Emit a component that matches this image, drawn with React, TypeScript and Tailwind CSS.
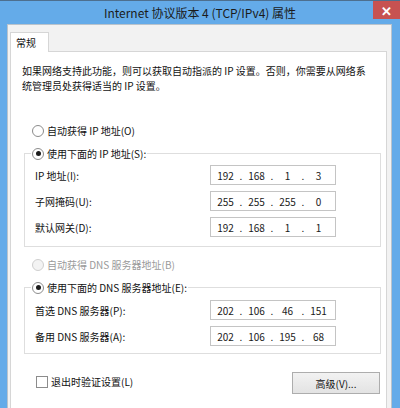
import { Fragment } from "react";

const FONT = { fontFamily: '"Noto Sans CJK SC", "Noto Sans", sans-serif' };

function Radio({ checked, disabled }: { checked?: boolean; disabled?: boolean }) {
  return (
    <span
      className={
        "flex h-[12px] w-[12px] shrink-0 items-center justify-center rounded-full border " +
        (disabled ? "border-[#cfcfcf] bg-[#f3f3f3]" : "border-[#8c8c8c] bg-white")
      }
    >
      {checked && <span className="h-[5px] w-[5px] rounded-full bg-[#1c1c1c]" />}
    </span>
  );
}

function IpBox({ parts }: { parts: string[] }) {
  return (
    <div className="flex h-[20px] w-[126px] items-center border border-[#c4c4c4] bg-white pl-[1px] text-[#1a1a1a]">
      {parts.map((p, i) => (
        <Fragment key={i}>
          <span className="w-[27px] text-center">{p}</span>
          {i < 3 && <span className="w-[4px] text-center">.</span>}
        </Fragment>
      ))}
    </div>
  );
}

function Row({ label, parts }: { label: string; parts: string[] }) {
  return (
    <div className="flex h-[20px] items-center">
      <span className="w-[175px]">{label}</span>
      <IpBox parts={parts} />
    </div>
  );
}

export default function App() {
  return (
    <div
      className="flex h-[408px] w-[400px] flex-col overflow-hidden border-t border-[#4d6f8f] bg-[#64abe9]"
      style={FONT}
    >
      {/* title bar */}
      <div className="grid h-[23px] shrink-0 grid-cols-[27px_1fr_27px]">
        <div />
        <div className="flex items-center justify-center text-[12px] text-[#1b1b1b]">
          Internet 协议版本 4 (TCP/IPv4) 属性
        </div>
        <div className="flex h-[18px] items-center justify-center bg-[#c75251] text-[13px] font-bold leading-none text-white">
          ✕
        </div>
      </div>

      {/* client area */}
      <div className="ml-[7px] flex w-[385px] flex-1 flex-col border border-b-0 border-[#b9c3cc] bg-[#f2f2f2] pl-[2px] pt-[7px] text-[10px] leading-[15px] text-[#111]">
        <div className="-mb-px flex">
          <div className="relative z-10 h-[20px] w-[39px] border border-b-0 border-[#d6d6d6] bg-white pl-[5px] pt-[2px]">
            常规
          </div>
        </div>
        <div className="flex w-[377px] flex-1 flex-col border border-b-0 border-[#d6d6d6] bg-white">
          <p className="whitespace-nowrap pl-[11px] pt-[11px]">
            如果网络支持此功能，则可以获取自动指派的 IP 设置。否则，你需要从网络系
            <br />
            统管理员处获得适当的 IP 设置。
          </p>

          <div className="mt-[30px] flex h-[15px] items-center gap-[3px] pl-[21px]">
            <Radio />
            <span>自动获得 IP 地址(O)</span>
          </div>

          <fieldset className="ml-[13px] mt-[8px] w-[357px] border border-[#dedede] px-[10px] pb-[9px] pt-[4px]">
            <legend className="ml-[-4px] flex items-center gap-[3px] px-[1px]">
              <Radio checked />
              <span>使用下面的 IP 地址(S):</span>
            </legend>
            <div className="flex flex-col gap-[6px]">
              <Row label="IP 地址(I):" parts={["192", "168", "1", "3"]} />
              <Row label="子网掩码(U):" parts={["255", "255", "255", "0"]} />
              <Row label="默认网关(D):" parts={["192", "168", "1", "1"]} />
            </div>
          </fieldset>

          <div className="mt-[10px] flex h-[15px] items-center gap-[3px] pl-[21px] text-[#9a9a9a]">
            <Radio disabled />
            <span>自动获得 DNS 服务器地址(B)</span>
          </div>

          <fieldset className="ml-[13px] mt-[8px] w-[357px] border border-[#dedede] px-[10px] pb-[7px] pt-[5px]">
            <legend className="ml-[-4px] flex items-center gap-[3px] px-[1px]">
              <Radio checked />
              <span>使用下面的 DNS 服务器地址(E):</span>
            </legend>
            <div className="flex flex-col gap-[6px]">
              <Row label="首选 DNS 服务器(P):" parts={["202", "106", "46", "151"]} />
              <Row label="备用 DNS 服务器(A):" parts={["202", "106", "195", "68"]} />
            </div>
          </fieldset>

          <div className="mt-[18px] flex items-start justify-between pl-[25px] pr-[6px]">
            <div className="mt-[2px] flex items-center gap-[3px]">
              <span className="h-[12px] w-[12px] border border-[#8c8c8c] bg-white" />
              <span>退出时验证设置(L)</span>
            </div>
            <button className="h-[22px] w-[88px] border border-[#adadad] bg-gradient-to-b from-[#f2f2f2] to-[#e3e3e3] text-[10px] text-[#111]">
              高级(V)...
            </button>
          </div>
        </div>
      </div>
    </div>
  );
}
